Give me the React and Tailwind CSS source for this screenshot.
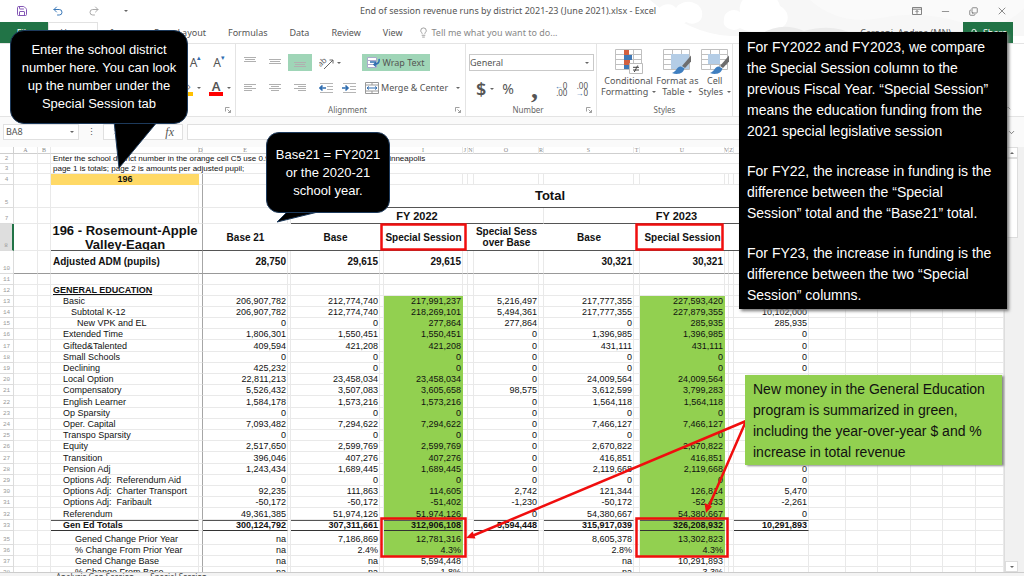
import { clsx } from 'clsx'
import { ChevronUp, ChevronDown, Lightbulb, Minus, Redo2, Save, Undo2, X, Copy, UserRound } from 'lucide-react'

const COLS = [
  { id: 'A', w: 24 },
  { id: 'B', w: 13 },
  { id: 'C', w: 148, label: '' },
  { id: 'D', w: 4 },
  { id: 'E', w: 85 },
  { id: 'F', w: 3, label: '' },
  { id: 'G', w: 89 },
  { id: 'H', w: 4, label: '' },
  { id: 'I', w: 79 },
  { id: 'J', w: 5 },
  { id: 'N', w: 6 },
  { id: 'O', w: 65 },
  { id: 'R', w: 5 },
  { id: 'S', w: 90 },
  { id: 'T', w: 6 },
  { id: 'U', w: 85 },
  { id: 'V', w: 4 },
  { id: 'Z', w: 5 },
  { id: 'AA', w: 75 },
  { id: 'AB', w: 37 },
  { id: 'AC', w: 32 },
  { id: 'AD', w: 33 },
  { id: 'AE', w: 32 },
  { id: 'AF', w: 33 },
  { id: 'AG' },
]

const VALUE_COLS = ['E', 'G', 'I', 'O', 'S', 'U', 'AA']
const GREEN_COLS = ['I', 'U']

// label, indent level, then one value for each of VALUE_COLS
const EDUCATION = [
  ['Basic', 1, '206,907,782', '212,774,740', '217,991,237', '5,216,497', '217,777,355', '227,593,420', '9,816,065'],
  ['Subtotal K-12', 2, '206,907,782', '212,774,740', '218,269,101', '5,494,361', '217,777,355', '227,879,355', '10,102,000'],
  ['New VPK and EL', 3, '0', '0', '277,864', '277,864', '0', '285,935', '285,935'],
  ['Extended Time', 1, '1,806,301', '1,550,451', '1,550,451', '0', '1,396,985', '1,396,985', '0'],
  ['Gifted&Talented', 1, '409,594', '421,208', '421,208', '0', '431,111', '431,111', '0'],
  ['Small Schools', 1, '0', '0', '0', '0', '0', '0', '0'],
  ['Declining', 1, '425,232', '0', '0', '0', '0', '0', '0'],
  ['Local Option', 1, '22,811,213', '23,458,034', '23,458,034', '0', '24,009,564', '24,009,564', '0'],
  ['Compensatory', 1, '5,526,432', '3,507,083', '3,605,658', '98,575', '3,612,599', '3,799,283', '186,684'],
  ['English Learner', 1, '1,584,178', '1,573,216', '1,573,216', '0', '1,564,118', '1,564,118', '0'],
  ['Op Sparsity', 1, '0', '0', '0', '0', '0', '0', '0'],
  ['Oper. Capital', 1, '7,093,482', '7,294,622', '7,294,622', '0', '7,466,127', '7,466,127', '0'],
  ['Transpo Sparsity', 1, '0', '0', '0', '0', '0', '0', '0'],
  ['Equity', 1, '2,517,650', '2,599,769', '2,599,769', '0', '2,670,822', '2,670,822', '0'],
  ['Transition', 1, '396,046', '407,276', '407,276', '0', '416,851', '416,851', '0'],
  ['Pension Adj', 1, '1,243,434', '1,689,445', '1,689,445', '0', '2,119,668', '2,119,668', '0'],
  ['Options Adj:  Referendum Aid', 1, '0', '0', '0', '0', '0', '0', '0'],
  ['Options Adj:  Charter Transport', 1, '92,235', '111,863', '114,605', '2,742', '121,344', '126,814', '5,470'],
  ['Options Adj:  Faribault', 1, '-50,172', '-50,172', '-51,402', '-1,230', '-50,172', '-52,433', '-2,261'],
  ['Referendum', 1, '49,361,385', '51,974,126', '51,974,126', '0', '54,380,667', '54,380,667', '0'],
]

const TOTALS = ['Gen Ed Totals', 1, '300,124,792', '307,311,661', '312,906,108', '5,594,448', '315,917,039', '326,208,932', '10,291,893']

const CHANGES = [
  ['Gened Change Prior Year', 4, 'na', '7,186,869', '12,781,316', '', '8,605,378', '13,302,823', ''],
  ['% Change From Prior Year', 4, 'na', '2.4%', '4.3%', '', '2.8%', '4.3%', ''],
  ['Gened Change Base', 4, 'na', 'na', '5,594,448', '', 'na', '10,291,893', ''],
  ['% Change From Base', 4, 'na', 'na', '1.8%', '', 'na', '3.3%', ''],
]

const INDENTS = ['pl-0.5', 'pl-3', 'pl-5', 'pl-[26px]', 'pl-6']

function RowHead({ n, active }) {
  return (
    <th
      scope="row"
      className={clsx(
        'border-b border-r border-[#dcdcdc] p-0 text-center align-bottom font-mono text-[6px] leading-[8px] font-normal text-[#999]',
        active && 'border-r-2 border-r-[#217346] bg-[#dedede]'
      )}
    >
      {n}
    </th>
  )
}

function Row({ n, height = 'h-[11px]', data = [], green, bold, total, big, underline }) {
  const [label, indent = 0, ...values] = data
  return (
    <tr className={height}>
      <RowHead n={n} />
      {COLS.map(c => {
        const i = VALUE_COLS.indexOf(c.id)
        const isGreen = green && GREEN_COLS.includes(c.id)
        const ruled = total && (i >= 0 || c.id === 'C')
        return (
          <td
            key={c.id}
            className={clsx(
              'border-r p-0 whitespace-pre',
              big ? 'text-[10px] leading-[12px]' : total ? 'text-[9px] leading-[9px]' : 'text-[9px] leading-[10px]',
              (bold || total) && 'font-bold',
              isGreen ? 'border-[#92d050] bg-[#92d050]' : 'border-[#e9e9e9]',
              c.id === 'D' && 'border-r-[#a6a6a6]',
              ruled ? 'border-t border-b border-t-[#555] border-b-[#333]' : 'border-b',
              big && 'border-b-[#999]',
              c.id === 'C' && INDENTS[indent],
              i >= 0 && 'pr-px text-right'
            )}
          >
            {c.id === 'C' && (underline ? <span className="underline">{label}</span> : label)}
            {i >= 0 && values[i]}
          </td>
        )
      })}
    </tr>
  )
}

// empty cells for the given column ids
function Blanks({ ids, className = 'border-[#e9e9e9]' }) {
  return ids.map(id => <td key={id} className={clsx('border-b border-r p-0', className)} />)
}

function HeadCell({ children, span = 1 }) {
  return (
    <th scope="col" colSpan={span} className="border-b border-[#555] p-0 text-[10px] leading-[11px] font-bold">
      {children}
    </th>
  )
}

function Sheet() {
  return (
    <table className="w-full table-fixed border-separate border-spacing-0 bg-white font-['Liberation_Sans',sans-serif] text-[#111]">
      <colgroup>
        <col className="w-[14px]" />
        {COLS.map(c => <col key={c.id} style={{ width: c.w }} />)}
      </colgroup>
      <thead>
        <tr className="h-[7px]">
          <th className="border-b border-r border-[#cfcfcf] p-0" />
          {COLS.map(c => (
            <th key={c.id} scope="col" className="border-b border-r border-[#cfcfcf] border-r-[#e9e9e9] p-0 text-center font-['Liberation_Serif',serif] text-[6px] leading-[6px] font-normal text-[#888]">
              <span className="flex justify-center">{c.label ?? (c.id.length > 1 ? '' : c.id)}</span>
            </th>
          ))}
        </tr>
      </thead>
      <tbody>
        <tr className="h-[10px]">
          <RowHead n={2} />
          <Blanks ids={['A', 'B']} />
          <td colSpan={16} className="border-b border-[#e9e9e9] p-0 pl-0.5 text-[8px] leading-[9px] whitespace-nowrap">
            Enter the school district number in the orange cell C5 use 0.9 for the state totals and 1.25 for Minneapolis
          </td>
          <Blanks ids={['AA', 'AB', 'AC', 'AD', 'AE', 'AF', 'AG']} />
        </tr>
        <tr className="h-[10px]">
          <RowHead n={3} />
          <Blanks ids={['A', 'B']} />
          <td colSpan={16} className="border-b border-[#e9e9e9] p-0 pl-0.5 text-[8px] leading-[9px] whitespace-nowrap">
            page 1 is totals; page 2 is amounts per adjusted pupil;
          </td>
          <Blanks ids={['AA', 'AB', 'AC', 'AD', 'AE', 'AF', 'AG']} />
        </tr>
        <tr className="h-[11px]">
          <RowHead n={4} />
          <Blanks ids={['A', 'B']} />
          <td className="bg-[#ffd966] p-0 text-center text-[9px] leading-[11px] font-bold">196</td>
          <Blanks ids={['D']} className="border-[#e9e9e9] border-r-[#a6a6a6]" />
          <Blanks ids={COLS.slice(4).map(c => c.id)} />
        </tr>
        <tr className="h-[23px]">
          <RowHead n={5} />
          <Blanks ids={['A', 'B', 'C']} />
          <Blanks ids={['D']} className="border-[#e9e9e9] border-r-[#a6a6a6]" />
          <Blanks ids={['E', 'F']} />
          <th scope="colgroup" colSpan={13} className="border-b border-[#555] p-0 text-[13px] leading-[16px] font-bold">Total</th>
          <Blanks ids={['AB', 'AC', 'AD', 'AE', 'AF', 'AG']} />
        </tr>
        <tr className="h-4">
          <RowHead n={7} />
          <Blanks ids={['A', 'B', 'C']} />
          <Blanks ids={['D']} className="border-[#e9e9e9] border-r-[#a6a6a6]" />
          <Blanks ids={['E', 'F']} />
          <th scope="colgroup" colSpan={7} className="border-r border-b border-[#555] border-r-[#e9e9e9] p-0 text-[11px] leading-[14px] font-bold">FY 2022</th>
          <th scope="colgroup" colSpan={6} className="border-b border-[#555] p-0 text-[11px] leading-[14px] font-bold">FY 2023</th>
          <Blanks ids={['AB', 'AC', 'AD', 'AE', 'AF', 'AG']} />
        </tr>
        <tr className="h-[27px]">
          <RowHead n={8} active />
          <Blanks ids={['A', 'B']} />
          <th scope="col" className="border-b border-[#555] p-0 align-top">
            <div className="h-[26px] overflow-hidden text-[13px] leading-[14px] font-bold">196 - Rosemount-Apple Valley-Eagan</div>
          </th>
          <Blanks ids={['D']} className="border-[#555] border-r-[#a6a6a6]" />
          <HeadCell>Base 21</HeadCell>
          <HeadCell />
          <HeadCell>Base</HeadCell>
          <HeadCell />
          <HeadCell>Special Session</HeadCell>
          <HeadCell span={2} />
          <HeadCell>Special Sess over Base</HeadCell>
          <HeadCell />
          <HeadCell>Base</HeadCell>
          <HeadCell />
          <HeadCell>Special Session</HeadCell>
          <HeadCell span={2} />
          <HeadCell>Special Sess over Base</HeadCell>
          <Blanks ids={['AB', 'AC', 'AD', 'AE', 'AF', 'AG']} />
        </tr>
        <Row n={10} height="h-[23px]" bold big data={['Adjusted ADM (pupils)', 0, '28,750', '29,615', '29,615', '', '30,321', '30,321', '']} />
        <Row n={11} data={['']} />
        <Row n={12} bold underline data={['GENERAL EDUCATION', 0]} />
        {EDUCATION.map((row, i) => (
          <Row key={row[0]} n={13 + i} height={i % 5 === 4 ? 'h-3' : 'h-[11px]'} data={row} green />
        ))}
        <Row n={33} data={TOTALS} total green />
        <tr className="h-[3px]">
          <th className="border-r border-[#dcdcdc] p-0" />
          {COLS.map(c => (
            <td key={c.id} className={clsx('border-r p-0', GREEN_COLS.includes(c.id) ? 'border-[#92d050] bg-[#92d050]' : c.id === 'D' ? 'border-[#a6a6a6]' : 'border-[#e9e9e9]')} />
          ))}
        </tr>
        {CHANGES.map((row, i) => (
          <Row key={row[0]} n={35 + i} data={row} green={i < 2} />
        ))}
      </tbody>
    </table>
  )
}

function Lines({ widths, className }) {
  return (
    <svg viewBox="0 0 12 10" className={clsx('h-[10px] w-3', className)} stroke="#b0b0b0" strokeWidth="1" aria-hidden="true">
      {widths.map(([a, b], i) => <path key={i} d={`M${a} ${i * 2 + 1.5}H${b}`} />)}
    </svg>
  )
}

const TOP = [[0, 12], [1, 11], [0, 12]]
const LEFT = [[0, 12], [0, 8], [0, 12], [0, 8]]
const CENTER = [[0, 12], [2, 10], [0, 12], [2, 10]]
const RIGHT = [[0, 12], [4, 12], [0, 12], [4, 12]]

function IndentIcon({ out }) {
  return (
    <svg viewBox="0 0 14 10" className="h-[10px] w-[14px]" fill="none" aria-hidden="true">
      <path d="M1 .5H14M8 3.5H14M8 6.5H14M1 9.5H14" stroke="#b5b5b5" />
      <path d={out ? 'M7 5H1M3.5 2.5L1 5L3.5 7.5' : 'M0 5H6M3.5 2.5L6 5L3.5 7.5'} stroke="#2f6db0" strokeWidth="1.6" />
    </svg>
  )
}

function Caret() {
  return (
    <svg viewBox="0 0 4 2" className="h-0.5 w-1 shrink-0" aria-hidden="true">
      <path d="M0 0H4L2 2Z" fill="#666" />
    </svg>
  )
}

function Launcher() {
  return (
    <svg viewBox="0 0 6 6" className="size-1.5" fill="none" stroke="#888" strokeWidth=".8" aria-hidden="true">
      <path d="M.5 4.5V.5H4.5M2.5 2.5L5.3 5.3M5.5 3V5.5H3" />
    </svg>
  )
}

function Group({ label, className, children, launcher }) {
  return (
    <section aria-label={label} className={clsx('flex flex-none flex-col border-r border-[#e4e4e4]', className)}>
      <div className="min-h-0 flex-1">{children}</div>
      <div className="flex h-3 items-center px-1">
        <span className="flex-1 text-center text-[8px] leading-[12px] text-[#666]">{label}</span>
        {launcher && <Launcher />}
      </div>
    </section>
  )
}

function StyleButton({ lines, kind }) {
  return (
    <button type="button" className="flex flex-col items-center whitespace-nowrap">
      <svg viewBox="0 0 28 27" className="h-[27px] w-7" fill="none" aria-hidden="true">
        <path d="M.5 1.5H26.5V21.5H.5ZM.5 6.5H26.5M.5 11.5H26.5M.5 16.5H26.5M9.5 1.5V21.5M18.5 1.5V21.5" fill="#fff" stroke="#c0c0c0" />
        {kind === 'cond' && (
          <>
            <path d="M9 2H14V7H9ZM9 12H15V17H9Z" fill="#d2603f" />
            <path d="M9 7H17V12H9ZM9 17H14V21H9Z" fill="#4078b5" />
            <path d="M14.5 15.5H27.5V25.5H14.5Z" fill="#fff" stroke="#bbb" />
            <path d="M18 19.3H24M18 22H24M22.7 17.5L19.3 24" stroke="#444" />
          </>
        )}
        {kind !== 'cond' && (
          <>
            <path d={kind === 'table' ? 'M8 6H26V21H8Z' : 'M7 6H19V16H7Z'} fill="#b4cde6" />
            <path d="M28 7.500L19 18L22 20L28 13.500Z" fill="#6d6d6d" />
            <path d="M18 18.500C14 18 14 23 9 25C14 27 20 26 21.500 20.500Z" fill="#3f7fc0" />
          </>
        )}
      </svg>
      <span className="text-[9px] leading-[11px]">{lines[0]}</span>
      <span className="flex items-center gap-1 text-[9px] leading-[11px]">{lines[1]} <Caret /></span>
    </button>
  )
}

function TitleBar() {
  return (
    <header className="relative flex h-[22px] flex-none items-center px-4">
      <svg viewBox="0 0 374 43" className="absolute top-0 right-0 h-[43px] w-[374px]" aria-hidden="true">
        <path d="M0 0H374V36H80Q40 34 0 0Z" fill="#f7f7f7" />
        <path d="M8 12a10 9 0 0 1 18-4a14 12 0 0 1 26 8a10 8 0 0 1-16 6a16 9 0 0 1-28-10ZM74 20a10 9 0 0 1 16-8a20 17 0 0 1 40-6a18 14 0 0 1 4 20a26 12 0 0 1-44 2a10 8 0 0 1-16-8Z" fill="#fff" />
        <path d="M160 0Q190 26 230 18T310 22T374 8V0Z" fill="#fafafa" />
        <path d="M110 35q20-14 44-4q30-8 50 4Z" fill="#ebebeb" />
      </svg>
      <div className="relative flex items-center gap-6">
        <button type="button" aria-label="Save"><Save size={12} color="#8457b5" /></button>
        <button type="button" aria-label="Undo"><Undo2 size={12} color="#3a78b8" /></button>
        <button type="button" aria-label="Redo"><Redo2 size={12} color="#aaa" /></button>
        <Caret />
      </div>
      <h1 className="relative flex-1 pr-6 text-center text-[9px] text-[#555]">
        End of session revenue runs by district 2021-23 (June 2021).xlsx - Excel
      </h1>
      <div className="relative flex items-center gap-[18px] text-[#666]">
        <button type="button" aria-label="Ribbon display options">
          <svg viewBox="0 0 10 8" className="h-2 w-[10px]" fill="none" stroke="#666" aria-hidden="true">
            <path d="M.5.5H9.5V7.5H.5ZM.5 2.2H9.5M5 6.8V3.5M3.5 5L5 3.5L6.5 5" strokeWidth=".8" />
          </svg>
        </button>
        <button type="button" aria-label="Minimize"><Minus size={11} strokeWidth={1.5} /></button>
        <button type="button" aria-label="Restore"><Copy size={9} strokeWidth={2} className="rotate-180 -scale-x-100" /></button>
        <button type="button" aria-label="Close"><X size={12} strokeWidth={1.5} /></button>
      </div>
    </header>
  )
}

function TabBar() {
  return (
    <nav className="relative flex h-[21px] flex-none items-center gap-[22px] pr-[11px] text-[9px] text-[#555]">
      <div className="flex w-[206px] flex-none items-stretch self-stretch">
        <button type="button" className="w-12 bg-[#217346] text-white">File</button>
        <button type="button" className="w-[50px] border-x border-t border-[#e2e2e2] bg-white">Home</button>
        <button type="button" className="w-[50px]">Insert</button>
        <button type="button" className="flex-1 text-right whitespace-nowrap">Page Layout</button>
      </div>
      <button type="button">Formulas</button>
      <button type="button">Data</button>
      <button type="button">Review</button>
      <button type="button">View</button>
      <label className="flex flex-1 items-center gap-0.5">
        <Lightbulb size={11} strokeWidth={1.5} className="-ml-1.5 flex-none text-[#777]" />
        <input aria-label="Tell me what you want to do" placeholder="Tell me what you want to do..." className="w-36 text-[9px] outline-none placeholder:text-[#888]" />
      </label>
      <div className="flex items-center gap-3 self-stretch">
        <span className="whitespace-nowrap">Caroani, Andrea (MN)</span>
        <button type="button" className="flex w-[50px] items-center justify-center gap-1 self-stretch bg-[#217346] text-white">
          <UserRound size={10} /> Share
        </button>
      </div>
    </nav>
  )
}

function Ribbon() {
  return (
    <div className="flex h-[74px] flex-none border-y border-[#e4e4e4] bg-white text-[#555]">
      <Group label="" className="w-[236px]" launcher>
        <div className="flex justify-end gap-3 pt-2.5 pr-2.5">
          <button type="button" aria-label="Increase font size" className="flex items-start text-[12px] leading-[18px]">A<span className="text-[7px] leading-[8px] text-[#2f6db0]">▴</span></button>
          <button type="button" aria-label="Decrease font size" className="flex items-start text-[12px] leading-[18px]">A<span className="text-[7px] leading-[8px] text-[#2f6db0]">▾</span></button>
        </div>
        <div className="flex items-center justify-end gap-1 pt-2 pr-1">
          <button type="button" aria-label="Fill color" className="w-3.5 border-b-4 border-[#ffc000] text-[11px] leading-[12px]">◇</button>
          <Caret />
          <button type="button" aria-label="Font color" className="ml-1 w-3.5 border-b-4 border-[#f00] text-[13px] leading-[12px] font-semibold">A</button>
          <Caret />
        </div>
      </Group>
      <Group label="Alignment" className="w-[230px]" launcher>
        <div className="flex items-center gap-[13px] pt-2.5 pl-2">
          <button type="button" aria-label="Top align"><Lines widths={TOP} className="mb-1" /></button>
          <button type="button" aria-label="Middle align"><Lines widths={TOP} /></button>
          <button type="button" aria-label="Bottom align" className="-mx-1.5 flex h-[17px] w-6 items-end justify-center bg-[#9fd5b7]"><Lines widths={TOP} /></button>
          <button type="button" aria-label="Orientation" className="flex items-center gap-0.5">
            <svg viewBox="0 0 16 14" className="h-[14px] w-4" fill="none" stroke="#666" aria-hidden="true">
              <path d="M5 13L14 4M10.500 4H14V7.500" />
              <text x="0" y="8" fontSize="8" fill="#666" stroke="none" transform="rotate(-40 5 8)">ab</text>
            </svg>
            <Caret />
          </button>
          <button type="button" className="ml-2 flex h-[17px] w-[68px] items-center justify-center gap-0.5 bg-[#9fd5b7] text-[9px] whitespace-nowrap">
            <svg viewBox="0 0 13 11" className="h-[11px] w-[13px]" fill="none" aria-hidden="true">
              <path d="M.5 .5H9.5V10.5H.5ZM.5 3.500H9.500M.5 7.500H9.500" fill="#fff" stroke="#aac" />
              <path d="M3 5H9M12 2Q13 7 7 7.500M9 5.500L7 7.500L9 9.500" stroke="#2f6db0" strokeWidth="1.5" />
            </svg>
            Wrap Text
          </button>
        </div>
        <div className="flex items-center gap-[13px] pt-2.5 pl-2">
          <button type="button" aria-label="Align left"><Lines widths={LEFT} /></button>
          <button type="button" aria-label="Center"><Lines widths={CENTER} /></button>
          <button type="button" aria-label="Align right"><Lines widths={RIGHT} /></button>
          <button type="button" aria-label="Decrease indent" className="-mr-1"><IndentIcon out /></button>
          <button type="button" aria-label="Increase indent"><IndentIcon /></button>
          <button type="button" className="-ml-1 flex items-center gap-0.5 text-[9px] whitespace-nowrap">
            <svg viewBox="0 0 14 12" className="h-3 w-[14px]" fill="none" aria-hidden="true">
              <path d="M.5.5H13.5V11.5H.5ZM.5 3H13.5M.5 9H13.5M7 .5V3M7 9V11.5" stroke="#999" />
              <path d="M2 6H12M4 4.500L2 6L4 7.500M10 4.500L12 6L10 7.500" stroke="#2f6db0" />
            </svg>
            Merge &amp; Center
            <span className="pl-1.5"><Caret /></span>
          </button>
        </div>
      </Group>
      <Group label="Number" className="w-[131px]" launcher>
        <div className="mt-2.5 ml-[3px] flex h-[17px] w-[125px] items-center border border-[#c9c9c9] pr-1">
          <select aria-label="Number format" className="flex-1 appearance-none text-[9px] leading-[14px] outline-none">
            <option>General</option>
          </select>
          <Caret />
        </div>
        <div className="flex items-center pt-2 pr-2 pl-2.5">
          <button type="button" className="text-[18px] leading-[20px] font-semibold">$</button>
          <span className="pr-2 pl-1"><Caret /></span>
          <button type="button" className="text-[14px] leading-[20px]">%</button>
          <button type="button" aria-label="Comma style" className="h-5 flex-1 font-['Liberation_Serif',serif] text-[28px] leading-[10px] font-bold">,</button>
          <button type="button" aria-label="Increase decimal" className="text-right text-[8px] leading-[7px]"><span className="font-bold text-[#2f6db0]">←</span>0<br />.00</button>
          <button type="button" aria-label="Decrease decimal" className="ml-2 text-right text-[8px] leading-[7px]">.00<br /><span className="font-bold text-[#2f6db0]">→</span>0</button>
        </div>
      </Group>
      <Group label="Styles" className="w-[136px]">
        <div className="flex justify-between pt-1 pr-1 pl-1">
          <StyleButton kind="cond" lines={['Conditional', 'Formatting']} />
          <StyleButton kind="table" lines={['Format as', 'Table']} />
          <StyleButton kind="cell" lines={['Cell', 'Styles']} />
        </div>
      </Group>
      <div className="flex flex-1 items-end justify-end p-1 pr-3">
        <button type="button" aria-label="Collapse the ribbon"><ChevronUp size={8} /></button>
      </div>
    </div>
  )
}

function FormulaBar() {
  return (
    <div className="flex h-[30px] flex-none items-center gap-1 bg-[#fafafa] pr-2 pl-[3px] text-[9px] text-[#555]">
      <div className="flex h-4 w-[76px] items-center border border-[#e0e0e0] bg-white pr-1">
        <input aria-label="Name box" defaultValue="BA8" className="w-full pl-0.5 outline-none" />
        <Caret />
      </div>
      <span className="w-4 text-center">⋮</span>
      <div className="flex h-4 w-20 items-center justify-between border border-[#e0e0e0] bg-white px-2 text-[#aaa]">
        <X size={8} />
        <span className="font-['Liberation_Serif',serif] text-[12px] text-[#555] italic">fx</span>
      </div>
      <input aria-label="Formula" className="h-4 flex-1 border border-[#e0e0e0] bg-white" />
      <ChevronDown size={9} />
    </div>
  )
}

function Scrollbar() {
  return (
    <div className="flex w-5 flex-none flex-col items-center border-l border-[#ddd] bg-[#f1f1f1] pr-1.5" aria-hidden="true">
      <div className="flex h-[11px] w-full items-center justify-center border border-[#ddd] bg-white"><span className="rotate-180"><Caret /></span></div>
      <div className="h-20 w-full border border-[#ddd] bg-white" />
      <div className="flex-1" />
      <div className="flex h-[11px] w-full items-center justify-center border border-[#ddd] bg-white"><Caret /></div>
    </div>
  )
}

function Annotations() {
  return (
    <>
      <svg viewBox="0 0 1024 576" className="pointer-events-none absolute top-0 left-0 h-[576px] w-[1024px]" fill="none" aria-hidden="true">
        <g stroke="#f00e0e" strokeWidth="2.5">
          <rect x="381.500" y="224.500" width="84" height="25" />
          <rect x="636.500" y="224.500" width="86" height="25" />
          <rect x="381.500" y="518.500" width="84" height="38" />
          <rect x="636.500" y="518.500" width="91" height="38" />
          <path d="M746 421L472 536M746 421L709 506" />
        </g>
        <path d="M466 538L472.500 531.500L475.500 538.500ZM706 513L704.500 503L712 506.500Z" fill="#f00e0e" />
        <path d="M114 121L119 168L158 121ZM288 211L277 222L322 211Z" fill="#000" stroke="#1d3a5c" />
      </svg>
      <aside className="absolute top-[30px] left-[10px] flex h-[94px] w-[178px] items-center justify-center rounded-[14px] border border-[#1d3a5c] bg-black text-center font-['Liberation_Sans',sans-serif] text-[13px] leading-[18px] whitespace-nowrap text-white">
        <p>Enter the school district<br />number here. You can look<br />up the number under the<br />Special Session tab</p>
      </aside>
      <aside className="absolute top-[132px] left-[266px] flex h-[81px] w-[124px] items-center justify-center rounded-[13px] border border-[#1d3a5c] bg-black text-center font-['Liberation_Sans',sans-serif] text-[13px] leading-[18px] whitespace-nowrap text-white">
        <p>Base21 = FY2021<br />or the 2020-21<br />school year.</p>
      </aside>
      <aside className="absolute top-8 left-[739px] flex h-[277px] w-[268px] flex-col gap-[19px] bg-black px-2 pt-[5px] font-['Liberation_Sans',sans-serif] text-[14px] leading-[21px] whitespace-nowrap text-white shadow-[2px_2px_3px_#777]">
        <p>For FY2022 and FY2023, we compare<br />the Special Session column to the<br />previous Fiscal Year. “Special Session”<br />means the education funding from the<br />2021 special legislative session</p>
        <p>For FY22, the increase in funding is the<br />difference between the “Special<br />Session” total and the “Base21” total.</p>
        <p>For FY23, the increase in funding is the<br />difference between the two “Special<br />Session” columns.</p>
      </aside>
      <aside className="absolute top-[375px] left-[745px] h-[90px] w-[257px] bg-[#92d050] px-2 pt-1 font-['Liberation_Sans',sans-serif] text-[14px] leading-[21px] whitespace-nowrap text-[#111] shadow-[2px_1px_2px_#888]">
        <p>New money in the General Education<br />program is summarized in green,<br />including the year-over-year $ and %<br />increase in total revenue</p>
      </aside>
    </>
  )
}

export default function App() {
  return (
    <div className="relative flex h-screen flex-col overflow-hidden bg-white font-['Noto_Sans','Open_Sans',sans-serif]">
      <TitleBar />
      <TabBar />
      <Ribbon />
      <FormulaBar />
      <main className="flex min-h-0 flex-1 overflow-hidden">
        <div className="min-w-0 flex-1 overflow-hidden">
          <Sheet />
        </div>
        <Scrollbar />
      </main>
      <footer className="flex h-1 flex-none gap-4 overflow-hidden border-t border-[#ccc] bg-[#f3f3f3] pl-14 text-[8px] leading-[8px] text-[#444]">
        <span>Analysis Gen Session</span>
        <span>Special Session</span>
      </footer>
      <Annotations />
    </div>
  )
}
